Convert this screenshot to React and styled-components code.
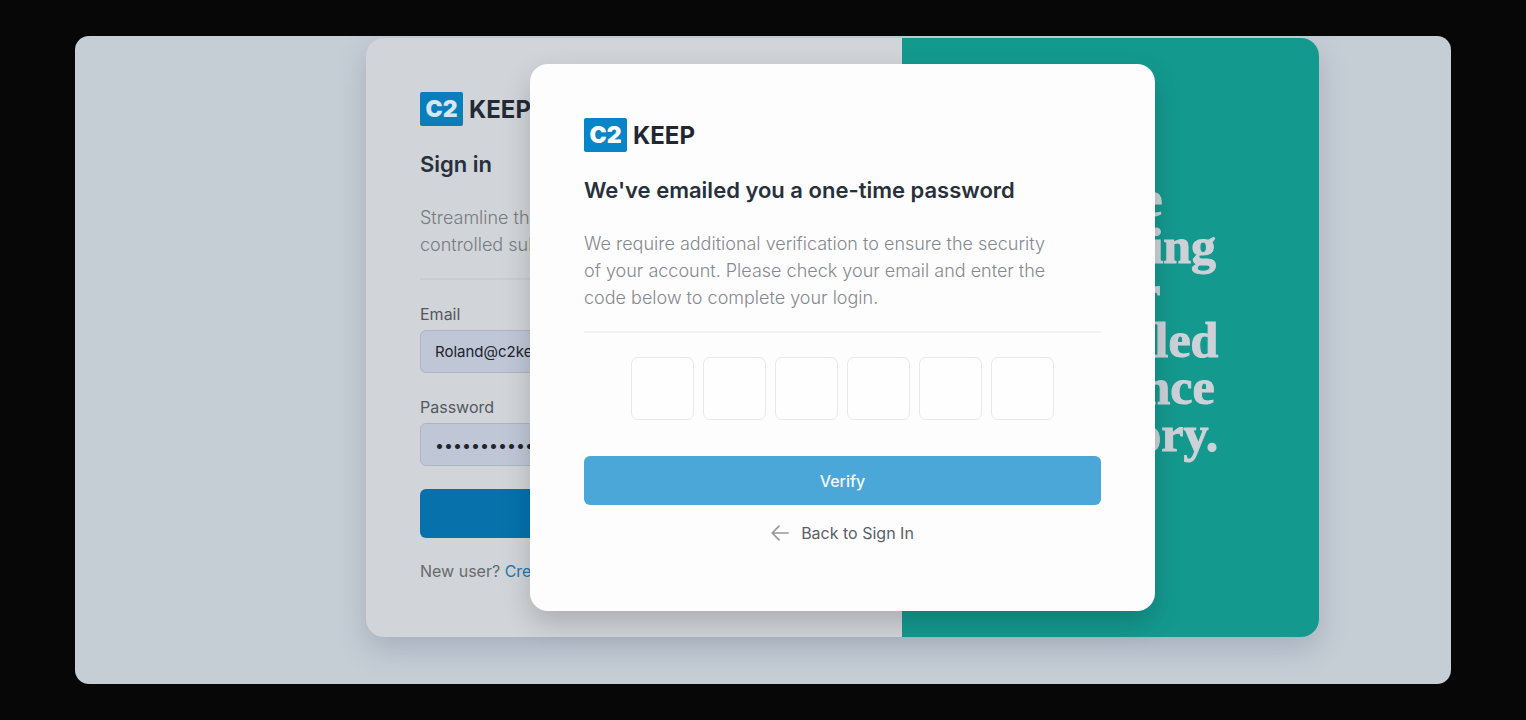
import React from 'react'
import styled, { createGlobalStyle } from 'styled-components'

const sans = "Inter, 'Liberation Sans', sans-serif"

const GlobalStyle = createGlobalStyle`
    * {
        box-sizing: border-box;
    }
    body {
        margin: 0;
        background: #070707;
        font-family: ${sans};
    }
    button, input {
        font-family: inherit;
    }
`

const Page = styled.div`
    display: flex;
    min-height: 100vh;
    padding: 36px 75px;
`

const Stage = styled.main`
    flex: 1;
    display: grid;
    grid-template-columns: minmax(0, 953px);
    justify-content: center;
    align-content: start;
    padding: 2px 0 47px 159px;
    border-radius: 14px;
    background: #c5cdd5;
    overflow: hidden;
`

const Card = styled.section`
    grid-area: 1 / 1;
    display: grid;
    grid-template-columns: 9fr 7fr;
    border-radius: 18px;
    background: #d1d4d8;
    box-shadow: 0 12px 28px rgba(90, 105, 130, 0.28);
    overflow: hidden;
`

const Pane = styled.div`
    display: flex;
    flex-direction: column;
    padding: 54px;
`

const Banner = styled.div`
    display: flex;
    align-items: center;
    justify-content: center;
    padding-bottom: 42px;
    background: #14998f;
`

const Slogan = styled.p`
    margin: 0;
    color: #cdd2d8;
    font-family: 'Liberation Serif', serif;
    font-size: 50px;
    font-weight: 700;
    line-height: 47px;
    text-align: center;
    -webkit-text-stroke: 1px #cdd2d8;
`

const Modal = styled.div`
    grid-area: 1 / 1;
    place-self: center;
    display: flex;
    flex-direction: column;
    width: 100%;
    max-width: 625px;
    padding: 54px 54px 66px;
    border-radius: 18px;
    background: #fdfdfe;
    box-shadow: 0 12px 28px rgba(0, 0, 0, 0.18);
`

const Brand = styled.div`
    display: flex;
    align-items: center;
    gap: 6px;
    height: 34px;
    margin-bottom: 22px;
    color: ${props => props.$dim ? '#242a35' : '#1f2733'};
    font-size: 24px;
    font-weight: 700;
`

const BrandMark = styled.span`
    display: flex;
    align-items: center;
    justify-content: center;
    width: 43px;
    height: 34px;
    border-radius: 2px;
    background: ${props => props.$dim ? '#0a7dbd' : '#0885c9'};
    color: ${props => props.$dim ? '#d8e6f0' : '#fff'};
    font-size: 23px;
    font-weight: 900;
`

const Title = styled.h1`
    margin: 0 0 24px;
    color: #28303b;
    font-size: 22px;
    font-weight: 600;
    line-height: 32px;
`

const Text = styled.p`
    max-width: 480px;
    margin: 0;
    color: ${props => props.$dim ? '#777b80' : '#85898e'};
    font-size: 18px;
    font-weight: 300;
    line-height: 27px;
`

const Divider = styled.hr`
    width: 100%;
    margin: 20px 0 0;
    border: 0;
    border-top: 2px solid ${props => props.$dim ? '#c9ccd0' : '#f0f2f3'};
`

const Label = styled.label`
    margin: 24px 0 6px;
    color: #54585f;
    font-size: 16px;
    line-height: 20px;
`

const Field = styled.input`
    width: 100%;
    height: 43px;
    padding: 0 14px;
    border: 1px solid #adb5c3;
    border-radius: 6px;
    background: #bfc6d6;
    color: #20242b;
    font-size: ${props => props.type === 'password' ? '16px' : '15px'};
`

const Button = styled.button`
    height: 49px;
    margin-top: ${props => props.$dim ? '23px' : '36px'};
    border: 0;
    border-radius: 6px;
    background: ${props => props.$dim ? '#0671ab' : '#4ba7d7'};
    color: #f2fbff;
    font-size: 16px;
    font-weight: 500;
`

const NewUser = styled.p`
    margin: 21px 0 0;
    color: #666a6f;
    font-size: 16px;
    line-height: 24px;
`

const Link = styled.a`
    color: #2478ac;
    text-decoration: none;
`

const Codes = styled.div`
    display: flex;
    justify-content: center;
    gap: 9px;
    margin-top: 24px;
`

const Digit = styled.input`
    width: 63px;
    height: 63px;
    min-width: 0;
    border: 1px solid #e6e9eb;
    border-radius: 7px;
    background: #fefefe;
    color: #28303b;
    font-size: 24px;
    text-align: center;
`

const BackLink = styled.a`
    display: flex;
    align-items: center;
    align-self: center;
    gap: 12px;
    margin-top: 16px;
    color: #5b5f66;
    font-size: 16px;
    line-height: 24px;
    text-decoration: none;
`

function Logo({ dim }) {
    return (
        <Brand $dim={dim}>
            <BrandMark $dim={dim}>C2</BrandMark>
            KEEP
        </Brand>
    )
}

function ArrowLeft() {
    return (
        <svg width="18" height="16" viewBox="0 0 18 16" fill="none" stroke="#94979c" strokeWidth="1.7" strokeLinecap="round" strokeLinejoin="round" aria-hidden="true">
            <path d="M17 8H1.2M8 1.2L1.2 8L8 14.8" />
        </svg>
    )
}

function SignIn() {
    return (
        <Card>
            <Pane>
                <Logo dim />
                <Title as="h2">Sign in</Title>
                <Text $dim>
                    Streamline the recording of your medical controlled substance inventory.
                </Text>
                <Divider $dim />
                <Label htmlFor="email">Email</Label>
                <Field id="email" type="email" defaultValue="Roland@c2keep.com" />
                <Label htmlFor="password">Password</Label>
                <Field id="password" type="password" defaultValue="controlled-c2" />
                <Button $dim type="button">Sign in</Button>
                <NewUser>New user? <Link href="#create">Create an account</Link></NewUser>
            </Pane>
            <Banner>
                <Slogan>
                    Take<br />managing<br />your<br />controlled<br />substance<br />inventory.
                </Slogan>
            </Banner>
        </Card>
    )
}

function Verify() {
    return (
        <Modal role="dialog" aria-labelledby="verify-title">
            <Logo />
            <Title id="verify-title">We've emailed you a one-time password</Title>
            <Text>
                We require additional verification to ensure the security of your account. Please check your email and enter the code below to complete your login.
            </Text>
            <Divider />
            <Codes>
                {[1, 2, 3, 4, 5, 6].map(n => (
                    <Digit key={n} type="text" inputMode="numeric" maxLength={1} aria-label={`Digit ${n}`} />
                ))}
            </Codes>
            <Button type="button">Verify</Button>
            <BackLink href="#signin"><ArrowLeft />Back to Sign In</BackLink>
        </Modal>
    )
}

export default function App() {
    return (
        <Page>
            <GlobalStyle />
            <Stage>
                <SignIn />
                <Verify />
            </Stage>
        </Page>
    )
}
